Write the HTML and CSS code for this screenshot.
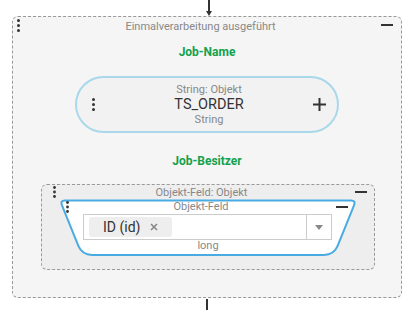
FILE: index.html
```html
<!DOCTYPE html>
<html lang="de">
<head>
    <meta charset="UTF-8">
    <meta name="viewport" content="width=device-width, initial-scale=1.0">
    <title>Einmalverarbeitung</title>
    <link rel="stylesheet" href="styles.css">
</head>
<body>
    <div class="flow">
        <div class="connector-in">
            <span class="line"></span>
            <span class="head"></span>
        </div>

        <div class="block outer">
            <div class="block-head">
                <svg class="dots" width="3" height="13" viewBox="0 0 3 13"><circle cx="1.5" cy="1.5" r="1.5"/><circle cx="1.5" cy="6.5" r="1.5"/><circle cx="1.5" cy="11.5" r="1.5"/></svg>
                <span class="block-title">Einmalverarbeitung ausgeführt</span>
                <span class="minus"></span>
            </div>

            <div class="param-label">Job-Name</div>

            <div class="pill">
                <svg class="dots" width="3" height="13" viewBox="0 0 3 13"><circle cx="1.5" cy="1.5" r="1.5"/><circle cx="1.5" cy="6.5" r="1.5"/><circle cx="1.5" cy="11.5" r="1.5"/></svg>
                <div class="pill-text">
                    <div class="type">String: Objekt</div>
                    <div class="value">TS_ORDER</div>
                    <div class="type">String</div>
                </div>
                <svg class="plus" width="13" height="13" viewBox="0 0 13 13"><rect x="5.5" y="0" width="2" height="13"/><rect x="0" y="5.5" width="13" height="2"/></svg>
            </div>

            <div class="param-label">Job-Besitzer</div>

            <div class="block inner">
                <div class="block-head">
                    <svg class="dots" width="3" height="12" viewBox="0 0 3 12"><circle cx="1.5" cy="1.5" r="1.4"/><circle cx="1.5" cy="6" r="1.4"/><circle cx="1.5" cy="10.5" r="1.4"/></svg>
                    <span class="block-title">Objekt-Feld: Objekt</span>
                    <span class="minus"></span>
                </div>

                <div class="field">
                    <svg class="field-shape" width="302" height="58" viewBox="0 0 302 58">
                        <path d="M 8,1.5 L 294,1.5 Q 299,1.5 297.1,6.1 L 280.74,46.73 Q 277,56 267,56 L 35,56 Q 25,56 21.26,46.73 L 4.9,6.1 Q 3,1.5 8,1.5 Z"/>
                    </svg>
                    <div class="block-head">
                        <svg class="dots" width="3" height="12" viewBox="0 0 3 12"><circle cx="1.5" cy="1.5" r="1.4"/><circle cx="1.5" cy="6" r="1.4"/><circle cx="1.5" cy="10.5" r="1.4"/></svg>
                        <span class="block-title">Objekt-Feld</span>
                        <span class="minus"></span>
                    </div>
                    <div class="select">
                        <div class="chips">
                            <span class="chip">ID (id)
                                <svg class="chip-x" width="8" height="8" viewBox="0 0 8 8"><path d="M1 1 L7 7 M7 1 L1 7"/></svg>
                            </span>
                        </div>
                        <div class="select-arrow"><span></span></div>
                    </div>
                    <div class="field-type">long</div>
                </div>
            </div>
        </div>

        <div class="connector-out"></div>
    </div>
</body>
</html>
```

FILE: styles.css
```css
body {
    margin: 0;
    background-color: #ffffff;
    font-family: Roboto, "Liberation Sans", sans-serif;
    color: #333;
}

.flow {
    width: 418px;
    height: 310px;
}

.connector-in {
    height: 16px;
    display: flex;
    flex-direction: column;
    align-items: center;
}

.connector-in .line {
    width: 2px;
    height: 11px;
    background-color: #333;
    margin-left: -1px;
}

.connector-in .head {
    width: 0;
    height: 0;
    border-left: 3.5px solid transparent;
    border-right: 3.5px solid transparent;
    border-top: 5px solid #333;
    margin-left: -1px;
}

.connector-out {
    width: 2px;
    height: 11px;
    background-color: #333;
    margin: 1px 0 0 206px;
}

.block {
    border: 1px dashed #999;
    border-radius: 6px;
    box-sizing: border-box;
}

.outer {
    margin-left: 12px;
    width: 390px;
    height: 282px;
    background-color: #f5f5f5;
}

.block-head {
    display: flex;
    align-items: center;
}

.block-head .block-title {
    flex: 1;
    text-align: center;
}

.block-head .minus {
    width: 12px;
    height: 2px;
    background-color: #333;
}

.dots {
    display: block;
    flex: none;
    fill: #333;
}

.block-title {
    font-size: 11px;
    color: #888;
    white-space: nowrap;
}

.outer > .block-head {
    height: 16px;
    padding: 0 8px 0 4px;
}

.outer > .block-head .block-title {
    line-height: 14px;
    padding-top: 3px;
}

.outer > .block-head .minus {
    margin-top: -1px;
}

.param-label {
    text-align: center;
    font-size: 12px;
    font-weight: bold;
    line-height: 16px;
    color: #13a14b;
    margin-top: 11px;
}

.pill + .param-label {
    margin-top: 20px;
}

.pill {
    width: 264px;
    height: 57px;
    box-sizing: border-box;
    margin: 16px auto 0;
    border: 2px solid #a9d8ea;
    border-radius: 29px;
    background-color: #f2f2f2;
    display: grid;
    grid-template-columns: 1fr auto 1fr;
    align-items: center;
    padding: 0 11px 0 15px;
}

.pill .plus {
    justify-self: end;
    fill: #333;
}

.pill-text {
    text-align: center;
    padding-top: 1px;
}

.pill-text .type {
    font-size: 11px;
    line-height: 14px;
    color: #888;
}

.pill-text .value {
    font-size: 14.5px;
    line-height: 16px;
    color: #333;
}

.inner {
    width: 334px;
    height: 86px;
    margin: 15px 0 0 28px;
    background-color: #eeeeee;
}

.inner > .block-head {
    height: 13px;
    padding: 0 7px 0 11px;
}

.inner > .block-head .block-title {
    line-height: 13px;
    padding: 1px 8px 0 0;
}

.field {
    position: relative;
    width: 302px;
    height: 58px;
    margin: 1px 0 0 15px;
}

.field-shape {
    position: absolute;
    left: 0;
    top: 0;
}

.field-shape path {
    fill: #ffffff;
    stroke: #4aabe3;
    stroke-width: 2;
}

.field > .block-head {
    position: relative;
    height: 12px;
    padding: 2px 11px 0 9px;
}

.field > .block-head .block-title {
    line-height: 12px;
    padding-right: 3px;
}

.select {
    position: relative;
    width: 249px;
    height: 26px;
    box-sizing: border-box;
    margin: 1px 0 0 26px;
    border: 1px solid #cccccc;
    background-color: #ffffff;
    display: flex;
}

.chips {
    flex: 1;
    padding: 2px 0 0 5px;
}

.chip {
    display: inline-flex;
    align-items: center;
    gap: 10px;
    height: 20px;
    padding: 0 14px;
    border-radius: 3px;
    background-color: #eeeeee;
    font-size: 14px;
    color: #333;
}

.chip-x path {
    stroke: #888;
    stroke-width: 1.6;
    fill: none;
}

.select-arrow {
    width: 24px;
    border-left: 1px solid #cccccc;
    display: flex;
    align-items: center;
    justify-content: center;
}

.select-arrow span {
    width: 0;
    height: 0;
    border-left: 4.5px solid transparent;
    border-right: 4.5px solid transparent;
    border-top: 5px solid #888;
}

.field-type {
    position: relative;
    text-align: center;
    font-size: 11px;
    line-height: 12px;
    color: #888;
}
```
